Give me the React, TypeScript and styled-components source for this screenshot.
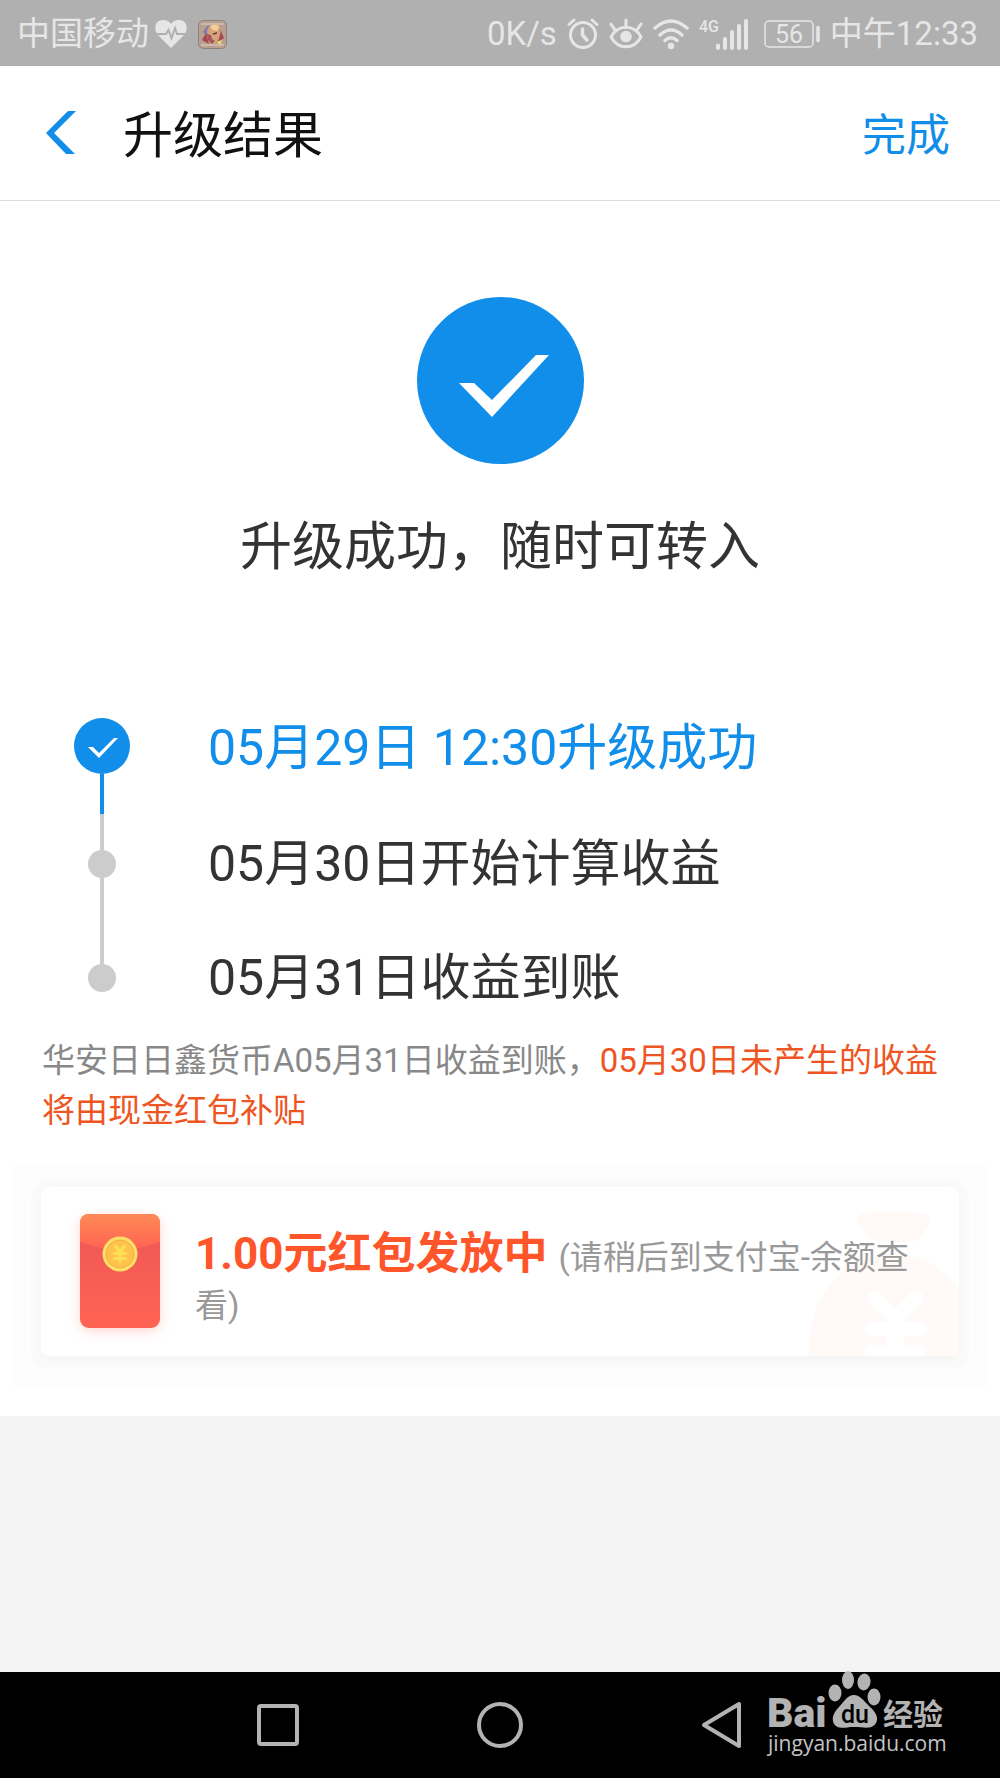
import React from "react";
import styled, { createGlobalStyle } from "styled-components";

const BLUE = "#108ee9";
const GREY_LINE = "#cccccc";
const STATUS = "#e6e6e6";
const NAV = "#b3b3b3";

const GlobalStyle = createGlobalStyle`
  * { box-sizing: border-box; }
  body {
    margin: 0;
    background: #f4f4f4;
    font-family: Roboto, "Noto Sans CJK SC", sans-serif;
    color: #333333;
  }
  button { font: inherit; border: 0; padding: 0; background: none; cursor: pointer; }
  svg { display: block; flex: none; }
`;

const Page = styled.div`
  min-height: 100vh;
  display: flex;
  flex-direction: column;
`;

const StatusBar = styled.div`
  height: 66px;
  padding: 2px 22px 0 17px;
  display: flex;
  align-items: center;
  justify-content: space-between;
  background: #b0b0b0;
  color: ${STATUS};
  font-size: 33px;
  line-height: 40px;
  white-space: nowrap;
`;

const StatusGroup = styled.div<{ $gap: number }>`
  display: flex;
  align-items: center;
  gap: ${(p) => p.$gap}px;
`;

const Header = styled.header`
  height: 135px;
  padding: 0 50px 0 40px;
  display: flex;
  align-items: center;
  background: #ffffff;
  border-bottom: 1px solid #dcdcdc;
`;

const BackButton = styled.button`
  width: 83px;
  height: 64px;
  display: flex;
  align-items: center;
`;

const Title = styled.h1`
  flex: 1;
  margin: 0;
  padding-top: 6px;
  font-size: 50px;
  line-height: 64px;
  font-weight: 400;
  color: #111111;
`;

const DoneButton = styled.button`
  && {
    padding-top: 6px;
    font-size: 44px;
    line-height: 64px;
    color: ${BLUE};
  }
`;

const Main = styled.main`
  padding: 96px 14px 28px;
  background: #ffffff;
`;

const Result = styled.section`
  display: flex;
  flex-direction: column;
  align-items: center;
`;

const ResultText = styled.h2`
  margin: 46px 0 0;
  font-size: 52px;
  line-height: 76px;
  font-weight: 400;
`;

const Timeline = styled.ol`
  list-style: none;
  margin: 132px 0 0;
  padding: 0 60px;
`;

const Step = styled.li<{ $active?: boolean }>`
  display: flex;
  gap: 78px;
  font-size: 50px;
  line-height: ${(p) => (p.$active ? 60 : 28)}px;
  color: ${(p) => (p.$active ? BLUE : "inherit")};
`;

const Marker = styled.div`
  width: 56px;
  display: flex;
  flex-direction: column;
  align-items: center;
`;

const Dot = styled.span`
  width: 28px;
  height: 28px;
  border-radius: 50%;
  background: ${GREY_LINE};
`;

const Tail = styled.span<{ $active?: boolean }>`
  width: 4px;
  height: ${(p) => (p.$active ? 76 : 86)}px;
  background: ${(p) =>
    p.$active ? `linear-gradient(${BLUE} 40px, ${GREY_LINE} 40px)` : GREY_LINE};
`;

const Note = styled.p`
  margin: 44px 28px 27px;
  font-size: 33px;
  line-height: 50px;
  color: #888888;
`;

const Highlight = styled.span`
  color: #ee5522;
`;

const CardFrame = styled.section`
  padding: 24px 27px 32px;
  background: #fdfdfd;
`;

const Card = styled.div`
  position: relative;
  min-height: 167px;
  padding: 27px 26px 26px 39px;
  display: flex;
  gap: 33px;
  border-radius: 8px;
  background: #ffffff;
  box-shadow: 0 3px 8px rgba(0, 0, 0, 0.03), 0 3px 0 10px #fafafa;
`;

const Envelope = styled.svg`
  filter: drop-shadow(0 3px 6px rgba(255, 90, 80, 0.25));
`;

const MoneyBag = styled.svg`
  position: absolute;
  right: 0;
  bottom: 0;
`;

const CardText = styled.p`
  position: relative;
  margin: 16px 0 0;
  font-size: 33px;
  line-height: 48px;
  color: #999999;
`;

const Amount = styled.strong`
  font-size: 44px;
  line-height: 48px;
  font-weight: 700;
  color: #ff552b;
`;

const Spacer = styled.div`
  flex: 1;
`;

const NavBar = styled.nav`
  position: relative;
  height: 106px;
  display: flex;
  justify-content: center;
  background: #000000;
`;

const NavButton = styled.button`
  width: 222px;
  display: flex;
  align-items: center;
  justify-content: center;
`;

const Watermark = styled.div`
  position: absolute;
  right: 54px;
  top: -2px;
  width: 178px;
  color: ${NAV};
`;

const Brand = styled.svg`
  overflow: visible;
`;

const Site = styled.div`
  font-family: "Open Sans", "Noto Sans", sans-serif;
  font-size: 21px;
  line-height: 26px;
  color: #c4c4c4;
`;

export default function App() {
  return (
    <>
      <GlobalStyle />
      <Page>
        <StatusBar>
          <StatusGroup $gap={6}>
            <span>中国移动</span>
            <StatusGroup $gap={11}>
              <svg width="32" height="30" viewBox="0 0 32 30" aria-hidden="true">
                <path d="M16 29 L3 16 C-2 10 0 1 8 1 C12 1 15 3 16 5 C17 3 20 1 24 1 C32 1 34 10 29 16 Z" fill={STATUS} />
                <path d="M2 15 H11 L13.5 11 L16.5 19 L20 9 L22 15 H30" fill="none" stroke="#b0b0b0" strokeWidth="2" />
              </svg>
              <svg width="29" height="29" viewBox="0 0 29 29" aria-hidden="true">
                <rect x="0.5" y="0.5" width="28" height="28" rx="5" fill="#b89f90" stroke="#8e837b" />
                <path d="M3 4 H26 M3 25 H26" stroke="#cdb9ab" strokeWidth="2" />
                <path d="M5 12 L9 6 L14 5 L9 16 Z" fill="#7f7cb0" />
                <path d="M4 20 L8 13 L11 24 Z M22 9 L26 18 L20 22 Z" fill="#a8484c" />
                <path d="M9 12 C10 4 18 2 21 6 C24 10 22 16 20 20 L16 25 L11 22 Z" fill="#d6a27c" />
                <path d="M9 14 L13 15 L14 19 L17 21 L14 24 L10 20 Z" fill="#a4565c" />
                <path d="M12 7 C15 3 20 4 21 7 L19 11 L15 10 Z" fill="#efcf9c" />
                <path d="M15 14 L19 13" stroke="#6b3a34" strokeWidth="1.500" />
                <path d="M19 22 L24 20 L22 25 Z" fill="#ece36c" />
              </svg>
            </StatusGroup>
          </StatusGroup>
          <StatusGroup $gap={10}>
            <span>0K/s</span>
            <svg width="32" height="32" viewBox="0 0 32 32" fill="none" stroke={STATUS} strokeLinecap="round" aria-label="alarm">
              <circle cx="16" cy="17" r="12.5" strokeWidth="3" />
              <path d="M15.500 11 V17 L20 22" strokeWidth="3.500" strokeLinejoin="round" />
              <path d="M2 6.500 L7 2 M30 6.500 L25 2" strokeWidth="3" />
            </svg>
            <svg width="34" height="32" viewBox="0 0 34 32" fill="none" stroke={STATUS} strokeLinecap="round" aria-label="eye comfort">
              <path d="M2 19 C9 6 25 6 32 19 C25 32 9 32 2 19 Z" strokeWidth="3" strokeLinejoin="round" />
              <circle cx="17" cy="18.500" r="5.800" fill={STATUS} stroke="none" />
              <path d="M17 2 V9 M2 6 L6 12 M32 6 L28 12" strokeWidth="3" />
            </svg>
            <svg width="36" height="32" viewBox="0 0 36 32" fill="none" stroke={STATUS} strokeWidth="3.500" strokeLinecap="round" aria-label="wifi">
              <path d="M2 10 Q18 -4 34 10" />
              <path d="M7 17 Q18 7 29 17" />
              <path d="M12 22.500 Q18 17 24 22.500" />
              <circle cx="18" cy="28" r="3.200" fill={STATUS} stroke="none" />
            </svg>
            <svg width="55" height="34" viewBox="0 0 55 34" aria-label="4G signal">
              <text x="0" y="15" fontSize="16" fontWeight="500" fontFamily="Roboto, sans-serif" fill={STATUS}>4G</text>
              <path d="M19 28.500 V31 M26 22 V31 M33 15 V31 M40 9 V31 M47 4 V31" stroke={STATUS} strokeWidth="4" strokeLinecap="round" />
            </svg>
            <svg width="56" height="28" viewBox="0 0 56 28" aria-label="battery 56">
              <rect x="1" y="1" width="48" height="26" rx="4" fill="none" stroke={STATUS} strokeWidth="1.500" />
              <path d="M54 7.500 V20.500" stroke={STATUS} strokeWidth="3.500" strokeLinecap="round" />
              <text x="25" y="23" textAnchor="middle" fontSize="25" fontFamily="Roboto, sans-serif" fill={STATUS}>56</text>
            </svg>
            <span>中午12:33</span>
          </StatusGroup>
        </StatusBar>

        <Header>
          <BackButton aria-label="返回">
            <svg width="38" height="44" viewBox="0 0 38 44" fill={BLUE} aria-hidden="true">
              <path d="M28 0 H36 L14 22 L35 43 H26 L6 22 Z" />
            </svg>
          </BackButton>
          <Title>升级结果</Title>
          <DoneButton>完成</DoneButton>
        </Header>

        <Main>
          <Result>
            <svg width="167" height="167" viewBox="0 0 167 167" aria-hidden="true">
              <circle cx="83.500" cy="83.500" r="83.500" fill={BLUE} />
              <path d="M42 86 H57 L75 103 L119 58 H132 L75 120 Z" fill="#ffffff" />
            </svg>
            <ResultText>升级成功，随时可转入</ResultText>
          </Result>

          <Timeline>
            <Step $active>
              <Marker>
                <svg width="56" height="56" viewBox="0 0 56 56" aria-hidden="true">
                  <circle cx="28" cy="28" r="28" fill={BLUE} />
                  <path d="M14 29 H19 L25 35 L40 20 H44 L25 40 Z" fill="#ffffff" />
                </svg>
                <Tail $active />
              </Marker>
              <span>05月29日 12:30升级成功</span>
            </Step>
            <Step>
              <Marker>
                <Dot />
                <Tail />
              </Marker>
              <span>05月30日开始计算收益</span>
            </Step>
            <Step>
              <Marker>
                <Dot />
              </Marker>
              <span>05月31日收益到账</span>
            </Step>
          </Timeline>

          <Note>
            华安日日鑫货币A05月31日收益到账，
            <Highlight>05月30日未产生的收益将由现金红包补贴</Highlight>
          </Note>

          <CardFrame>
            <Card>
              <MoneyBag width="150" height="146" viewBox="0 0 450 438" aria-hidden="true">
                <g fill="#fff9f7">
                  <path d="M143 34 Q142 16 160 11 Q250 -4 348 11 Q366 16 364 34 Q345 75 318 92 Q308 97 298 97 H212 Q200 97 192 92 Q165 72 143 34 Z" />
                  <ellipse cx="252" cy="410" rx="252" ry="280" />
                </g>
                <g stroke="#ffffff" strokeLinecap="round">
                  <line x1="199" y1="264" x2="260" y2="324" strokeWidth="44" />
                  <line x1="321" y1="264" x2="260" y2="324" strokeWidth="44" />
                  <line x1="188" y1="357" x2="330" y2="357" strokeWidth="44" />
                  <line x1="188" y1="426" x2="330" y2="426" strokeWidth="44" />
                  <line x1="259" y1="330" x2="259" y2="438" strokeWidth="52" />
                </g>
              </MoneyBag>
              <Envelope width="82" height="114" viewBox="0 0 82 114" aria-hidden="true">
                <defs>
                  <linearGradient id="body" x1="0" y1="0" x2="0" y2="1">
                    <stop offset="0.300" stopColor="#f15a55" />
                    <stop offset="1" stopColor="#ff6352" />
                  </linearGradient>
                  <linearGradient id="flap" x1="0" y1="0" x2="0" y2="1">
                    <stop offset="0" stopColor="#ff8a55" />
                    <stop offset="1" stopColor="#ff6352" />
                  </linearGradient>
                </defs>
                <rect x="0" width="80" height="114" rx="9" fill="url(#body)" />
                <path d="M0 28 V9 Q0 0 9 0 H71 Q80 0 80 9 V28 Q40 43 0 28 Z" fill="url(#flap)" />
                <circle cx="40" cy="40" r="17.500" fill="#ffe066" />
                <circle cx="40" cy="40" r="14" fill="#ffc24a" stroke="#eeb04c" />
                <g stroke="#ffdf55" strokeWidth="3" strokeLinecap="round">
                  <line x1="35.500" y1="32" x2="40" y2="38" />
                  <line x1="44.500" y1="32" x2="40" y2="38" />
                  <line x1="40" y1="38" x2="40" y2="48" />
                  <line x1="34.500" y1="39.500" x2="45.500" y2="39.500" />
                  <line x1="34.500" y1="44.500" x2="45.500" y2="44.500" />
                </g>
              </Envelope>
              <CardText>
                <Amount>1.00元红包发放中 </Amount>
                (请稍后到支付宝-余额查看)
              </CardText>
            </Card>
          </CardFrame>
        </Main>

        <Spacer />

        <NavBar>
          <NavButton aria-label="最近任务">
            <svg width="42" height="42" viewBox="0 0 42 42" aria-hidden="true">
              <rect x="2" y="2" width="38" height="38" rx="2" fill="none" stroke={NAV} strokeWidth="4" />
            </svg>
          </NavButton>
          <NavButton aria-label="主页">
            <svg width="46" height="46" viewBox="0 0 46 46" aria-hidden="true">
              <circle cx="23" cy="23" r="21" fill="none" stroke={NAV} strokeWidth="4" />
            </svg>
          </NavButton>
          <NavButton aria-label="返回上一级">
            <svg width="42" height="48" viewBox="0 0 42 48" aria-hidden="true">
              <path d="M38 3 V45 L3 24 Z" fill="none" stroke={NAV} strokeWidth="4" strokeLinejoin="round" />
            </svg>
          </NavButton>
          <Watermark>
            <Brand width="178" height="60" viewBox="0 0 178 60" fill={NAV} aria-hidden="true">
              <text x="-1" y="57" fontSize="41" fontWeight="900" fontFamily="Roboto, sans-serif">Bai</text>
              <ellipse cx="67" cy="23" rx="6.500" ry="8.500" />
              <ellipse cx="80" cy="10" rx="6" ry="9" />
              <ellipse cx="96" cy="12" rx="6.500" ry="8.500" transform="rotate(10 96 12)" />
              <ellipse cx="106" cy="27" rx="6.500" ry="8.500" />
              <path d="M86 25 C92 25 96 31 101 36 C108 42 111 48 108 53 C104 60 96 57 86 57 C76 57 70 60 66 54 C63 48 66 42 71 37 C76 32 79 25 86 25 Z" />
              <text x="87" y="53" textAnchor="middle" fontSize="25" fontWeight="500" fontFamily="Roboto, sans-serif" fill="#000000">du</text>
              <text x="115" y="55" fontSize="30" fontWeight="700" fontFamily="'Noto Sans CJK SC', sans-serif">经验</text>
            </Brand>
            <Site>jingyan.baidu.com</Site>
          </Watermark>
        </NavBar>
      </Page>
    </>
  );
}
